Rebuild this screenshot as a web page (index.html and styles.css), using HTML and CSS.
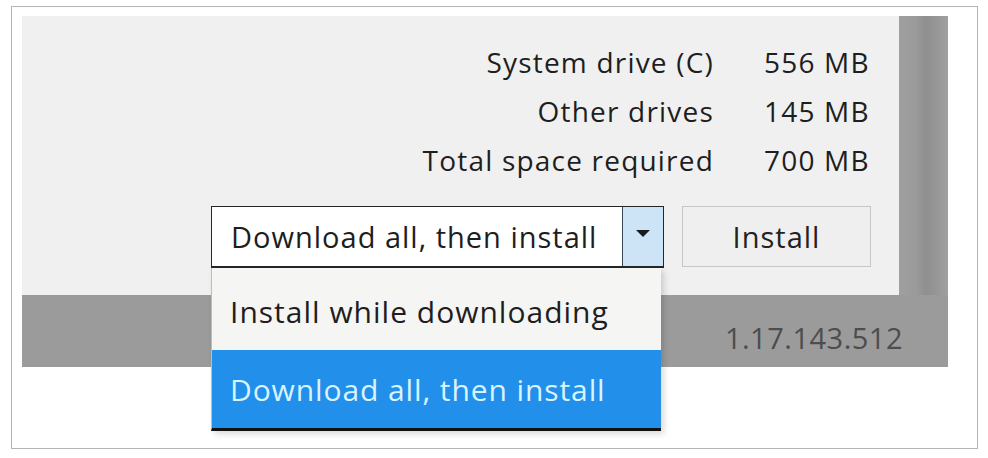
FILE: index.html
```html
<!DOCTYPE html>
<html>
<head>
  <title>Install options</title>
  <link rel="stylesheet" href="styles.css">
</head>
<body>
  <div class="frame">
    <div class="window">
      <div class="main">
        <div class="sizes">
          <span class="label">System drive (C)</span>
          <span class="value">556 MB</span>
          <span class="label">Other drives</span>
          <span class="value">145 MB</span>
          <span class="label">Total space required</span>
          <span class="value">700 MB</span>
        </div>

        <div class="controls">
          <div class="select">
            <span class="select-text">Download all, then install</span>
            <span class="select-arrow">
              <svg width="14" height="8" viewBox="0 0 14 8"><path d="M0 0 L14 0 L7 7 Z" fill="#1b1b1b"/></svg>
            </span>
            <ul class="options">
              <li class="option">Install while downloading</li>
              <li class="option selected">Download all, then install</li>
            </ul>
          </div>
          <div class="install">Install</div>
        </div>
      </div>
      <div class="scrollbar"></div>
      <div class="footer">1.17.143.512</div>
    </div>
  </div>
</body>
</html>
```

FILE: styles.css
```css
body {
  margin: 0;
  background: #fff;
  font-family: "Open Sans", "Noto Sans", sans-serif;
  color: #1e1e1e;
}

.frame {
  width: 967px;
  height: 443px;
  margin: 6px 0 0 11px;
  border: 1px solid #b4b4b4;
  padding: 9px 0 0 10px;
  box-sizing: border-box;
}

.window {
  width: 926px;
  display: grid;
  grid-template-columns: 877px 49px;
  grid-template-rows: 279px 72px;
  background: #9b9b9b;
}

.main {
  background: #f0f0f0;
  padding: 22px 28px 0 0;
  position: relative;
}

.sizes {
  display: grid;
  grid-template-columns: auto 107px;
  justify-content: end;
  column-gap: 50px;
  font-size: 28px;
  letter-spacing: 1.2px;
  line-height: 49px;
}

.label {
  text-align: right;
}

.controls {
  display: flex;
  justify-content: flex-end;
  gap: 18px;
  margin-top: 21px;
}

.select {
  position: relative;
  width: 453px;
  height: 62px;
  box-sizing: border-box;
  border: 1px solid #262626;
  border-bottom-width: 2px;
  background: #fff;
  display: flex;
}

.select-text {
  flex: 1;
  display: flex;
  align-items: center;
  padding-left: 19px;
  font-size: 29px;
  letter-spacing: 1px;
}

.select-arrow {
  width: 40px;
  border-left: 1px solid #3a4a58;
  background: #cde3f6;
  display: flex;
  align-items: center;
  justify-content: center;
  padding-bottom: 6px;
}

.options {
  position: absolute;
  top: 100%;
  left: -1px;
  width: 450px;
  margin: 2px 0 0;
  padding: 0;
  list-style: none;
  background: #f5f5f4;
  border-left: 1px solid #bdbdbd;
  border-bottom: 3px solid #111;
  box-shadow: 3px 3px 6px rgba(0, 0, 0, 0.15);
  box-sizing: border-box;
}

.option {
  height: 82px;
  display: flex;
  align-items: center;
  padding: 4px 0 0 18px;
  box-sizing: border-box;
  font-size: 30px;
  letter-spacing: 1px;
}

.option.selected {
  height: 78px;
  background: #2290ea;
  color: #d9f3ff;
  padding-top: 0;
  letter-spacing: 0.9px;
}

.install {
  width: 189px;
  height: 61px;
  box-sizing: border-box;
  border: 1px solid #c6c6c6;
  background: #efefef;
  display: flex;
  align-items: center;
  justify-content: center;
  font-size: 29px;
  letter-spacing: 1px;
  color: #222;
}

.scrollbar {
  background: linear-gradient(to right, #a0a0a0, #9a9a9a 35%, #8f8f8f 55%, #969696 75%, #a0a0a0);
}

.footer {
  grid-column: 1 / 3;
  text-align: right;
  padding: 27px 45px 0 0;
  font-size: 29px;
  line-height: 32px;
  color: #4d4d4d;
  letter-spacing: 0.5px;
}
```
